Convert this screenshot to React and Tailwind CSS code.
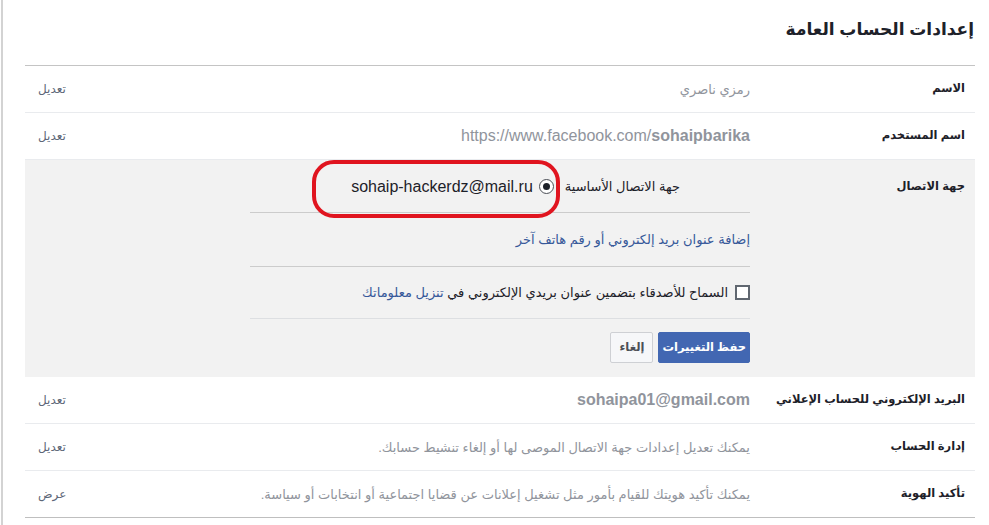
const FONT = "font-['Liberation_Sans','DejaVu_Sans',sans-serif]"

// صف إعداد عادي: العنوان يمين، القيمة في الوسط، رابط التعديل يسار
function Row({ label, children, action = 'تعديل', last = false }) {
  return (
    <div className={`flex h-[47px] items-center border-b ${last ? 'border-[#bfbfbf]' : 'border-[#e9ebee]'}`}>
      <div className="w-[225px] shrink-0 pr-[10px] text-[11.5px] font-bold text-[#1d2129]">{label}</div>
      <div className="min-w-0 flex-1">{children}</div>
      <div className="w-[140px] shrink-0 pl-[13px] text-left text-[12px] text-[#5d6778]">{action}</div>
    </div>
  )
}

export default function App() {
  return (
    <div className={`${FONT} h-[525px] w-[989px] overflow-hidden bg-white pl-[1px]`}>
      <div dir="rtl" className="h-full border-l-2 border-[#d3d3d3] pl-[22px] pr-[14px]">
        {/* العنوان */}
        <div className="h-[66px] border-b border-[#c4c4c4] pr-[1px] pt-[18px] text-[17px] font-bold leading-[24px] text-[#1d2129]">
          إعدادات الحساب العامة
        </div>

        <Row label="الاسم">
          <span className="text-[13px] text-[#90949c]">رمزي ناصري</span>
        </Row>

        <Row label="اسم المستخدم">
          <span dir="ltr" className="text-[16px] text-[#90949c]">
            https://www.facebook.com/<b>sohaipbarika</b>
          </span>
        </Row>

        {/* جهة الاتصال — مفتوحة للتعديل */}
        <div className="flex h-[217px] bg-[#f2f2f2]">
          <div className="w-[225px] shrink-0 pr-[10px] pt-[18px] text-[11.5px] font-bold text-[#1d2129]">جهة الاتصال</div>
          <div className="relative w-[500px] shrink-0">
            <div className="flex h-[53px] items-center border-b border-[#cccccc] pr-[70px] pt-[1px]">
              <span className="text-[13px] text-[#1d2129]">جهة الاتصال الأساسية</span>
              <span className="mr-[11px] flex h-[15px] w-[15px] items-center justify-center rounded-full border-[1.5px] border-[#4b4f56] bg-white">
                <span className="h-[7px] w-[7px] rounded-full bg-[#1d2129]" />
              </span>
              <span dir="ltr" className="mr-[6px] text-[16px] text-[#1d2129]">sohaip-hackerdz@mail.ru</span>
            </div>
            <div className="flex h-[54px] items-center border-b border-[#cccccc] text-[13px] text-[#365899]">
              إضافة عنوان بريد إلكتروني أو رقم هاتف آخر
            </div>
            <div className="flex h-[52px] items-center gap-[7px] border-b border-[#dddfe2]">
              <span className="h-[15px] w-[15px] shrink-0 border-2 border-[#606770] bg-white" />
              <span className="text-[13px] text-[#1d2129]">
                السماح للأصدقاء بتضمين عنوان بريدي الإلكتروني في <span className="text-[#365899]">تنزيل معلوماتك</span>
              </span>
            </div>
            <div className="flex gap-[5px] pt-[13px]">
              <button className="h-[31px] rounded-[2px] border border-[#4267b2] bg-[#4267b2] px-[3px] text-[11.5px] font-bold text-white">حفظ التغييرات</button>
              <button className="h-[31px] rounded-[2px] border border-[#ced0d4] bg-[#f6f7f9] px-[8px] text-[11.5px] font-bold text-[#4b4f56]">إلغاء</button>
            </div>
            {/* الإطار الأحمر حول البريد */}
            <div className="absolute left-[62px] top-0 h-[58px] w-[248px] rounded-[22px] border-[4px] border-[#e0141f]" />
          </div>
        </div>

        <Row label="البريد الإلكتروني للحساب الإعلاني">
          <span dir="ltr" className="text-[16px] font-bold text-[#90949c]">sohaipa01@gmail.com</span>
        </Row>

        <Row label="إدارة الحساب">
          <span className="text-[13px] text-[#90949c]">يمكنك تعديل إعدادات جهة الاتصال الموصى لها أو إلغاء تنشيط حسابك.</span>
        </Row>

        <Row label="تأكيد الهوية" action="عرض" last>
          <span className="whitespace-nowrap text-[13px] text-[#90949c]">يمكنك تأكيد هويتك للقيام بأمور مثل تشغيل إعلانات عن قضايا اجتماعية أو انتخابات أو سياسة.</span>
        </Row>
      </div>
    </div>
  )
}
